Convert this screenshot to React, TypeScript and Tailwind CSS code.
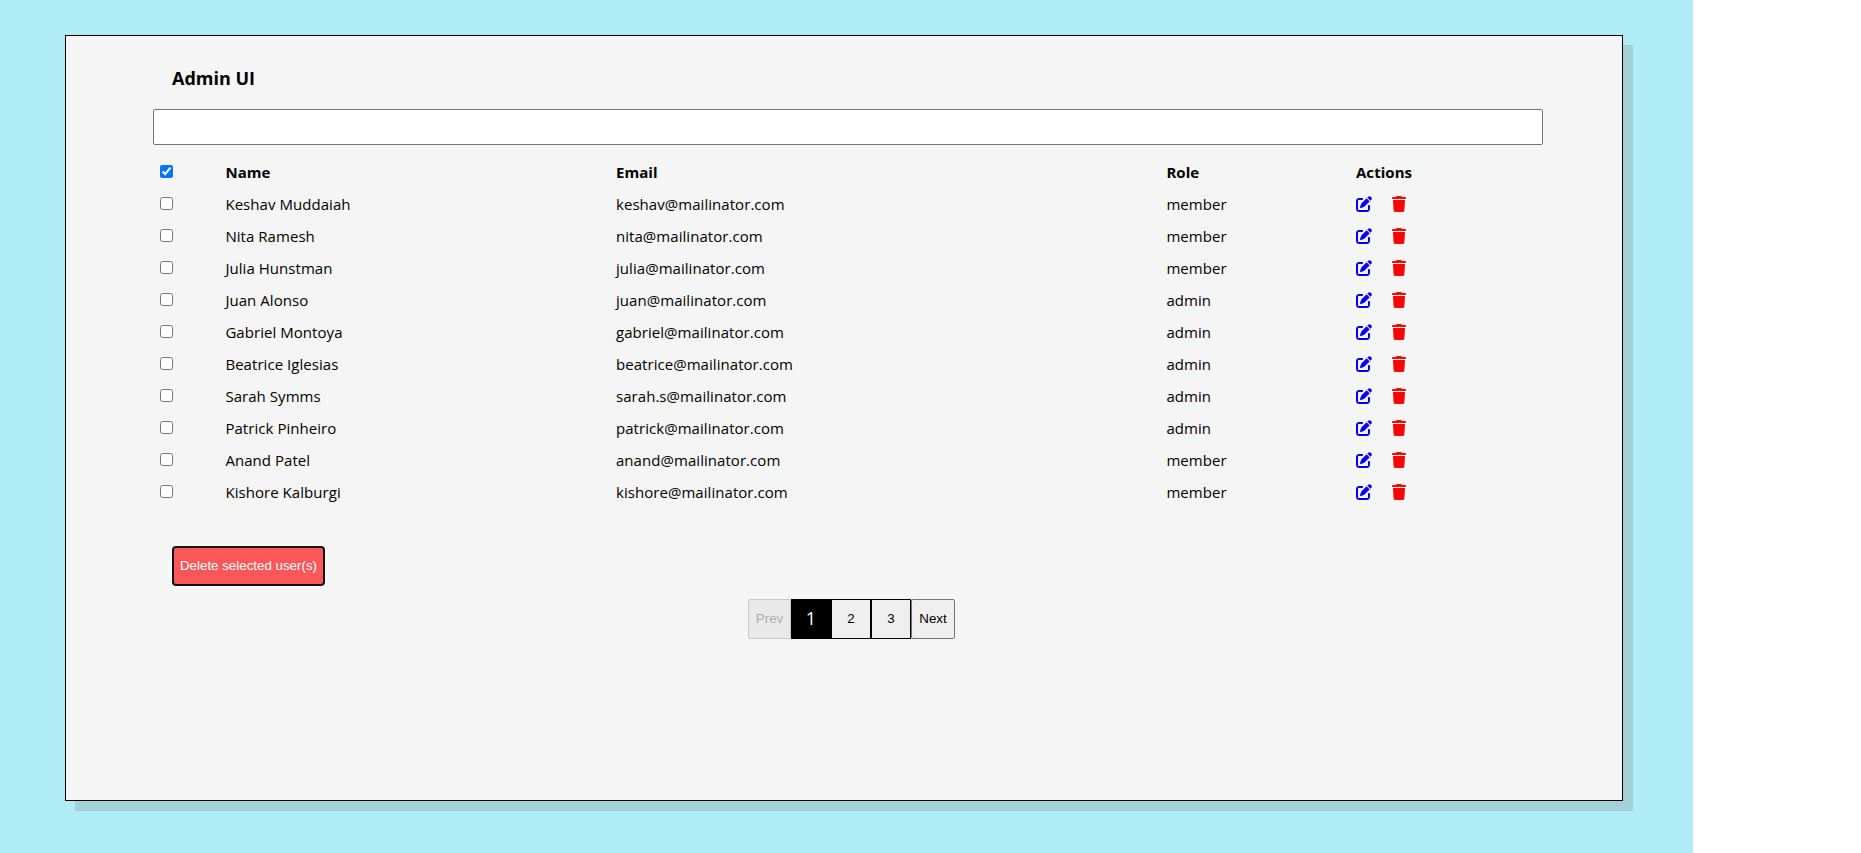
import { useState } from "react";
import { FaPenToSquare, FaTrash } from "react-icons/fa6";

type User = { name: string; email: string; role: string };

const users: User[] = [
  { name: "Keshav Muddaiah", email: "keshav@mailinator.com", role: "member" },
  { name: "Nita Ramesh", email: "nita@mailinator.com", role: "member" },
  { name: "Julia Hunstman", email: "julia@mailinator.com", role: "member" },
  { name: "Juan Alonso", email: "juan@mailinator.com", role: "admin" },
  { name: "Gabriel Montoya", email: "gabriel@mailinator.com", role: "admin" },
  { name: "Beatrice Iglesias", email: "beatrice@mailinator.com", role: "admin" },
  { name: "Sarah Symms", email: "sarah.s@mailinator.com", role: "admin" },
  { name: "Patrick Pinheiro", email: "patrick@mailinator.com", role: "admin" },
  { name: "Anand Patel", email: "anand@mailinator.com", role: "member" },
  { name: "Kishore Kalburgi", email: "kishore@mailinator.com", role: "member" },
];

const rowClass =
  "grid h-8 grid-cols-[65.4px_390.6px_550.4px_189.6px_1fr] items-start pl-[7px] text-[15px] leading-[30px] tracking-[0.05px]";

function Row({ user }: { user: User }) {
  return (
    <div className={rowClass}>
      <input type="checkbox" className="mt-2 size-[13px]" />
      <span>{user.name}</span>
      <span>{user.email}</span>
      <span>{user.role}</span>
      <span className="flex h-[30px] items-center gap-5">
        <FaPenToSquare className="size-4 text-[#0000ff]" />
        <FaTrash className="h-4 w-3.5 text-[#ff0000]" />
      </span>
    </div>
  );
}

export default function App() {
  const [query, setQuery] = useState("");

  return (
    <div className="h-[853px] w-[1693px] bg-[#afecf6] pt-[35px] pl-[65px] font-['Open_Sans','Noto_Sans',sans-serif] text-black">
      <main className="h-[766px] w-[1558px] border border-black bg-[#f5f5f5] pl-[87px] shadow-[10px_10px_0_#a4d0d7]">
        <h3 className="h-[73px] pt-[29px] pl-[19px] text-[18px] leading-[26px] font-bold">Admin UI</h3>
        <input
          type="text"
          value={query}
          onChange={(e) => setQuery(e.target.value)}
          className="block h-9 w-[1390px] rounded-[2px] border border-[#767676] bg-white px-2"
        />
        <section className="pt-3">
          <div className={rowClass}>
            <input type="checkbox" defaultChecked className="mt-2 size-[13px]" />
            <span className="font-bold">Name</span>
            <span className="font-bold">Email</span>
            <span className="font-bold">Role</span>
            <span className="font-bold">Actions</span>
          </div>
          {users.map((u) => (
            <Row key={u.email} user={u} />
          ))}
        </section>
        <button className="mt-[37px] ml-[19px] block h-10 w-[153px] rounded-[4px] border-2 border-[#101010] bg-[#fa5858] font-['Liberation_Sans',Arial,sans-serif] text-[13.333px] text-white shadow-[0_0_0_1px_#ffffff]">
          Delete selected user(s)
        </button>
        <nav className="mt-[13px] ml-[595px] flex h-10 font-['Liberation_Sans',Arial,sans-serif] text-[13.333px]">
          <button disabled className="w-[43px] rounded-[2px] border border-[#c9c9c9] bg-[#e9e9e9] text-[#adadad]">
            Prev
          </button>
          <button className="w-10 border border-black bg-black pb-0.5 font-['Open_Sans','Noto_Sans',sans-serif] text-[18px] text-white">
            1
          </button>
          <button className="w-10 border border-black bg-[#efefef]">2</button>
          <button className="w-10 border border-black bg-[#efefef]">3</button>
          <button className="w-11 rounded-[2px] border border-[#767676] bg-[#efefef]">Next</button>
        </nav>
      </main>
    </div>
  );
}
